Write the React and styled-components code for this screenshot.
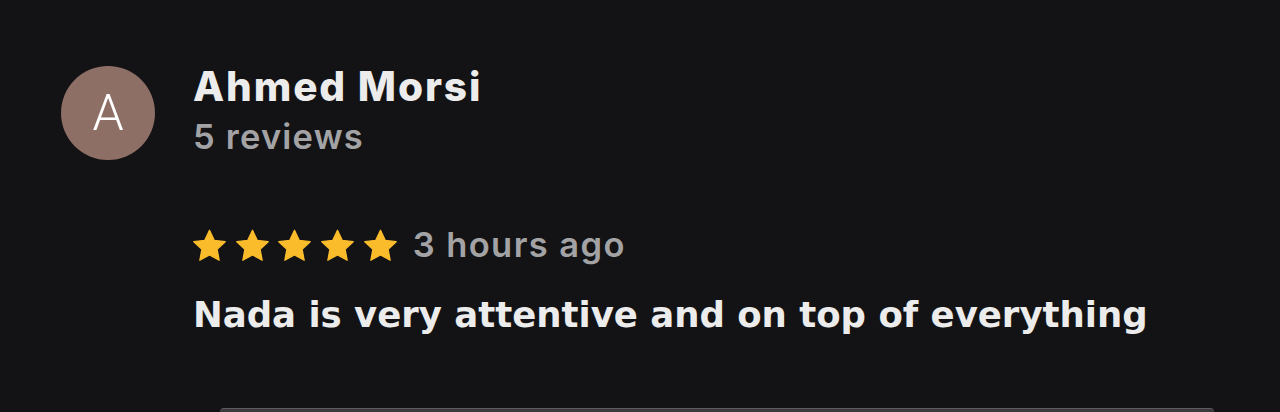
import React from 'react'
import styled, { createGlobalStyle } from 'styled-components'

const GlobalStyle = createGlobalStyle`
    html, body {
        margin: 0;
        padding: 0;
        background: #131315;
        height: 412px;
        overflow: hidden;
    }
    body {
        font-family: Inter, 'Noto Sans', sans-serif;
        -webkit-font-smoothing: antialiased;
    }
`

const Page = styled.main`
    display: flex;
    flex-direction: column;
    height: 412px;
    padding: 66px 0 0 61px;
    box-sizing: border-box;
`

const Header = styled.header`
    display: flex;
    align-items: flex-start;
    gap: 38px;
`

const Avatar = styled.div`
    width: 94px;
    height: 94px;
    border-radius: 50%;
    background: #8e6f66;
    color: #ffffff;
    display: flex;
    align-items: center;
    justify-content: center;
    font-family: Roboto, 'Liberation Sans', sans-serif;
    font-size: 50px;
    font-weight: 300;
    flex-shrink: 0;
`

const Who = styled.div`
    display: flex;
    flex-direction: column;
    margin-top: -3px;
`

const Name = styled.h2`
    margin: 0;
    font-size: 40.5px;
    line-height: 48px;
    font-weight: 800;
    letter-spacing: 1.9px;
    color: #ececec;
`

const Count = styled.span`
    margin-top: 6px;
    font-size: 34.5px;
    line-height: 40px;
    font-weight: 600;
    letter-spacing: 1.2px;
    color: #a3a3a5;
`

const Body = styled.section`
    display: flex;
    flex-direction: column;
    padding-left: 132px;
    margin-top: 65px;
`

const Meta = styled.div`
    display: flex;
    align-items: center;
    gap: 16px;
`

const Stars = styled.div`
    display: flex;
    gap: 9.7px;
`

const Ago = styled.span`
    font-size: 34.5px;
    line-height: 40px;
    font-weight: 600;
    letter-spacing: 1.4px;
    color: #a3a3a5;
`

const Text = styled.p`
    margin: 28px 0 0;
    font-family: 'DejaVu Sans', Inter, sans-serif;
    font-size: 35.5px;
    line-height: 44px;
    font-weight: 700;
    color: #ececec;
`

const Sheet = styled.div`
    margin: auto 66px 0 159px;
    height: 3px;
    border-radius: 14px 14px 0 0;
    background: #3b3b3d;
    border-top: 1px solid #5c5c5e;
`

const Star = () => (
    <svg width="33" height="33" viewBox="1.6 1.4 20.8 20.8">
        <path
            fill="#fbbc2c"
            stroke="#fbbc2c"
            strokeWidth="0.8"
            strokeLinejoin="round"
            d="M12 2.2l3 6.3 6.9.9-5.1 4.8 1.3 6.9L12 17.7l-6.1 3.4 1.3-6.9-5.1-4.8 6.9-.9z"
        />
    </svg>
)

const App = () => {
    return (
        <Page>
            <GlobalStyle />
            <Header>
                <Avatar>A</Avatar>
                <Who>
                    <Name>Ahmed Morsi</Name>
                    <Count>5 reviews</Count>
                </Who>
            </Header>
            <Body>
                <Meta>
                    <Stars>
                        {[0, 1, 2, 3, 4].map(i => <Star key={i} />)}
                    </Stars>
                    <Ago>3 hours ago</Ago>
                </Meta>
                <Text>Nada is very attentive and on top of everything</Text>
            </Body>
            <Sheet />
        </Page>
    )
}

export default App
